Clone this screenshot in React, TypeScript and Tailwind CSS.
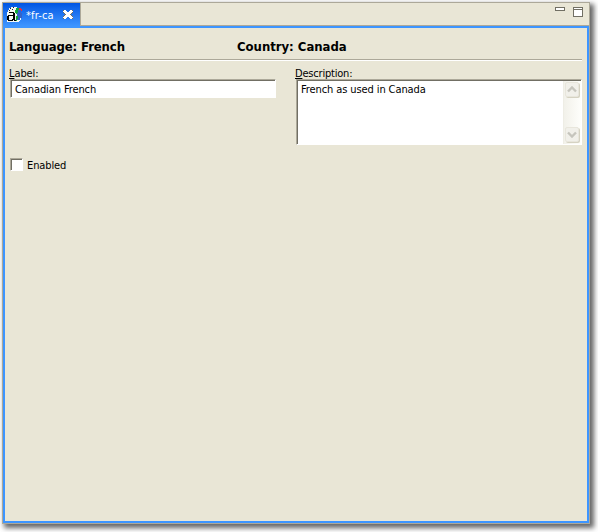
import React from "react";

const ui = "[font-family:'DejaVu_Sans_Condensed','DejaVu_Sans',sans-serif] [font-stretch:condensed]";

function LocaleIcon() {
  return (
    <svg width="16" height="16" viewBox="0 0 16 16" shapeRendering="crispEdges" className="shrink-0">
      <path d="M8 1h4v1h1v2h1v2h1v5h-1v2h-2v2H8z" fill="#3463c8" />
      <path d="M2 1h2V0h6v1H9v4h1v8h3v1h-1v1H0V5h1V3h1zM13 11h1v2h-1z" fill="#f4f8f4" />
      <path d="M9 1h3v2h-1v3h-1v1H9V6H8V3h1zM9 9h2v3h-1v2H9z" fill="#12a83a" />
      <path d="M12 1h2v1h1v2h-1V3h-2z" fill="#ee2c35" />
      <path d="M3 1h1v1H3zM6 0h1v1H6zM2 3h1v1H2zM5 2h1v1H5z" fill="#222" />
      <path d="M2 5h5v1h1v7h1v1H7v-1H6v1H1v-1H0V9h1V8h5V6H2zM2 9v4h3v-1h1V9z" fill="#000" fillRule="evenodd" />
    </svg>
  );
}

function CloseIcon() {
  return (
    <svg width="10" height="9" viewBox="0 0 10 9" shapeRendering="crispEdges" className="shrink-0">
      <path d="M0 0h3v1h1v1h2V1h1V0h3v3H9v1H8v1h1v1h1v3H7V8H6V7H4v1H3v1H0V6h1V5h1V4H1V3H0z" fill="#716f64" />
      <path d="M1 0h2v1h1v1h2V1h1V0h2v1h1v1H9v1H8v1H7v1h1v1h1v1h1v1H9v1H7V8H6V7H4v1H3v1H1V8H0V7h1V6h1V5h1V4H2V3H1V2H0V1h1z" fill="#fff" />
    </svg>
  );
}

function Arrow({ down = false }: { down?: boolean }) {
  return (
    <div className="flex h-[15px] w-[14px] items-center justify-center rounded-[2px] border border-[#e8e6dc] bg-[#f1f0ea] shadow-[1px_1px_0_#d5d2c2]">
      <svg width="10" height="7" viewBox="0 0 10 7" className={down ? "rotate-180" : ""}>
        <path d="M1 5.5l4-4 4 4" fill="none" stroke="#c6c5bd" strokeWidth="2.4" />
      </svg>
    </div>
  );
}

export default function App() {
  return (
    <div className="h-[532px] w-[598px] overflow-hidden bg-white pl-[2px] pt-[2px]">
      <div className={`flex h-[522px] w-[588px] flex-col border border-[#aca899] bg-[#e9e6d6] text-[11px] leading-[13px] tracking-[-0.1px] text-black shadow-[3px_3px_5px_1px_#666] ${ui}`}>
        <div className="flex h-[23px] shrink-0 justify-between border-b border-[#aca899]">
          <div className="flex h-[23px] w-[78px] items-center border-r border-[#aca899] bg-linear-to-b from-[#0054e3] to-[#3d95ff] pl-[4px] text-white">
            <LocaleIcon />
            <span className="ml-[3px] w-[37px] whitespace-nowrap pt-px tracking-[0.15px]">*fr-ca</span>
            <CloseIcon />
          </div>
          <div className="flex gap-[8px] pr-[6px] pt-[4px]">
            <div className="h-[4px] w-[10px] border border-[#716f64] bg-white" />
            <div className="h-[10px] w-[10px] border border-[#716f64] bg-white pt-px"><div className="h-px bg-[#716f64]" /></div>
          </div>
        </div>
        <div className="flex-1 border-2 border-[#3d95ff] px-[4px]">
          <div className="flex h-[31px] pt-[11px] text-[13px] font-bold leading-[16px]">
            <div className="w-[228px] tracking-[-0.12px]">Language: French</div>
            <div className="tracking-[-0.02px]">Country: Canada</div>
          </div>
          <div className="ml-px h-[2px] w-[572px] border-b border-t border-b-white border-t-[#aca899]" />
          <div className="flex pt-[6px]">
            <div className="w-[286px]">
              <div className="h-[12px]"><u>L</u>abel:</div>
              <div className="ml-px h-[19px] w-[266px] border border-b-white border-l-[#aca899] border-r-white border-t-[#aca899]">
                <div className="h-[17px] border-l border-t border-[#716f64] bg-white pl-[3px] pt-[2px]">Canadian French</div>
              </div>
            </div>
            <div>
              <div className="h-[12px] tracking-[-0.2px]"><u>D</u>escription:</div>
              <div className="ml-px h-[66px] w-[286px] border border-b-white border-l-[#aca899] border-r-white border-t-[#aca899]">
                <div className="flex h-[64px] justify-between border-l border-t border-[#716f64] bg-white">
                  <div className="pl-[3px] pt-[2px]">French as used in Canada</div>
                  <div className="flex w-[18px] flex-col items-start justify-between border-l border-[#eeede5] bg-linear-to-r from-[#f2f1ea] to-[#fefefb] pb-[2px] pl-px pt-px">
                    <Arrow /><Arrow down />
                  </div>
                </div>
              </div>
            </div>
          </div>
          <div className="mt-[13px] flex h-[13px] items-center">
            <div className="ml-px h-[13px] w-[13px] border border-b-white border-l-[#aca899] border-r-white border-t-[#aca899]">
              <div className="h-[11px] border-l border-t border-[#716f64] bg-white" />
            </div>
            <span className="ml-[4px] pt-[2px]">Enabled</span>
          </div>
        </div>
      </div>
    </div>
  );
}
